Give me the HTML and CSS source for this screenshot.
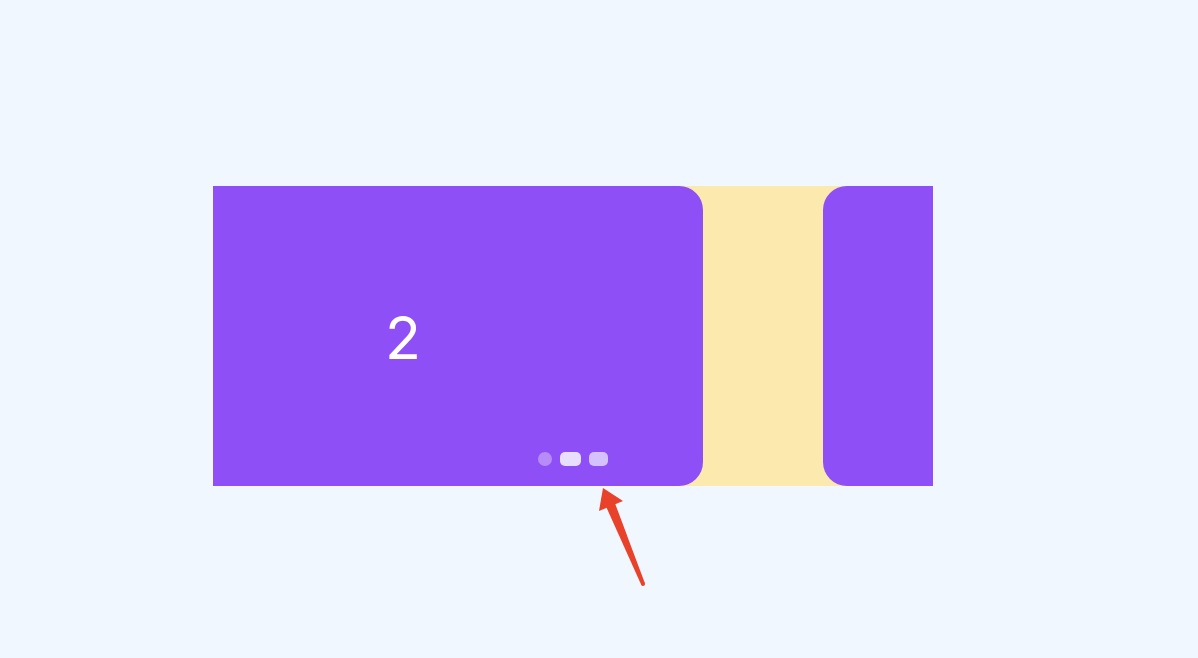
FILE: index.html
```html
<!DOCTYPE html>
<html>
<head>
<meta charset="utf-8">
<link rel="stylesheet" href="styles.css">
</head>
<body>
<div class="stage">
  <div class="carousel">
    <div class="slide slide-active">
      <span class="num">2</span>
      <div class="pager">
        <span class="dot"></span>
        <span class="pill pill-active"></span>
        <span class="pill pill-next"></span>
      </div>
    </div>
    <div class="slide"></div>
  </div>
  <svg class="arrow" width="60" height="110" viewBox="0 0 60 110">
    <polygon points="5,2 25,15 1,25" fill="#e8432a"/>
    <polygon points="15,12 6,16 43.2,98.8 46.9,97.2" fill="#e8432a"/>
    <circle cx="45" cy="98" r="2" fill="#e8432a"/>
  </svg>
</div>
</body>
</html>
```

FILE: styles.css
```css
html, body {
  margin: 0;
  padding: 0;
  background: #f0f7ff;
  width: 1198px;
  height: 658px;
  overflow: hidden;
}
.stage {
  position: relative;
  padding: 186px 0 0 213px;
}
.carousel {
  width: 720px;
  height: 300px;
  background: #fbe9ad;
  overflow: hidden;
  display: flex;
  gap: 120px;
}
.slide {
  flex: 0 0 600px;
  height: 300px;
  background: #8e4ff6;
  border-radius: 24px;
  position: relative;
  display: flex;
  align-items: center;
  justify-content: center;
}
.slide-active {
  margin-left: -110px;
}
.num {
  font-family: Inter, "Liberation Sans", Arial, sans-serif;
  font-size: 59px;
  color: #ffffff;
  line-height: 1;
  margin-top: 2px;
}
.pager {
  position: absolute;
  left: 435px;
  bottom: 20px;
  display: flex;
  gap: 8px;
  align-items: center;
}
.dot {
  width: 14px;
  height: 14px;
  border-radius: 50%;
  background: #b78cf9;
}
.pill {
  height: 14px;
  border-radius: 5px;
}
.pill-active {
  width: 21px;
  background: #e8defd;
}
.pill-next {
  width: 19px;
  background: #d5c1fb;
}
.arrow {
  position: absolute;
  left: 598px;
  top: 486px;
}
```
